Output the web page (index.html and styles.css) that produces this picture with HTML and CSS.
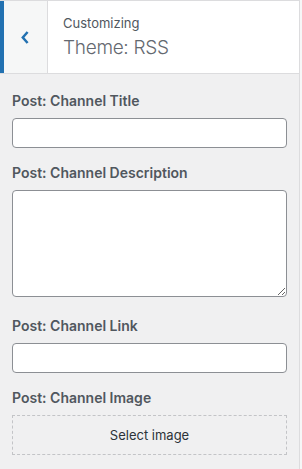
FILE: index.html
```html
<!DOCTYPE html>
<html lang="en">
<head>
    <meta charset="UTF-8">
    <meta name="viewport" content="width=device-width, initial-scale=1.0">
    <title>Customizing Theme: RSS</title>
    <link rel="stylesheet" href="styles.css">
</head>
<body>
    <div class="panel">
        <div class="panel-header">
            <button class="back-button" aria-label="Back">
                <svg width="8" height="13" viewBox="0 0 8 13">
                    <path d="M6.6 1 L1.8 6.5 L6.6 12" fill="none" stroke="#2271b1" stroke-width="2.5"/>
                </svg>
            </button>
            <div class="panel-title">
                <span class="notice">Customizing</span>
                <h3>Theme: RSS</h3>
            </div>
        </div>

        <ul class="controls">
            <li class="control">
                <label class="control-title" for="channel-title">Post: Channel Title</label>
                <input type="text" id="channel-title">
            </li>
            <li class="control">
                <label class="control-title" for="channel-desc">Post: Channel Description</label>
                <textarea id="channel-desc"></textarea>
            </li>
            <li class="control">
                <label class="control-title" for="channel-link">Post: Channel Link</label>
                <input type="text" id="channel-link">
            </li>
            <li class="control">
                <span class="control-title">Post: Channel Image</span>
                <button class="upload-button">Select image</button>
            </li>
        </ul>
    </div>
</body>
</html>
```

FILE: styles.css
```css
body {
    margin: 0;
    font-family: Inter, "Noto Sans", sans-serif;
    background-color: #f6f7f7;
    color: #50575e;
}
.panel {
    width: 299px;
    height: 469px;
    background: #f0f0f1;
    border-right: 1px solid #dcdcde;
}
.panel-header {
    display: flex;
    background: #fff;
    border-top: 1px solid #dcdcde;
    border-bottom: 1px solid #dcdcde;
    height: 72px;
}
.back-button {
    width: 48px;
    background: #f6f7f7;
    border: none;
    border-left: 4px solid #2271b1;
    border-right: 1px solid #dcdcde;
    padding: 0 1px 0 0;
    display: flex;
    align-items: center;
    justify-content: center;
    cursor: pointer;
}
.panel-title {
    padding: 10px 10px 0 15px;
}
.notice {
    display: block;
    font-size: 13px;
    line-height: 24px;
    color: #50575e;
}
.panel-title h3 {
    margin: 0;
    font-size: 19px;
    font-weight: 300;
    line-height: 26px;
    letter-spacing: -0.3px;
    color: #646970;
}
.controls {
    list-style: none;
    margin: 0;
    padding: 13px 12px 0;
}
.control {
    margin-bottom: 11px;
}
.control-title {
    display: block;
    font-size: 14px;
    font-weight: 600;
    line-height: 24px;
    padding-top: 2px;
    margin-bottom: 5px;
}
input,
textarea {
    display: block;
    box-sizing: border-box;
    width: 100%;
    border: 1px solid #8c8f94;
    border-radius: 4px;
    background: #fff;
    margin: 0;
    font-family: inherit;
}
input {
    height: 30px;
}
textarea {
    height: 107px;
    margin-bottom: 15px;
}
.upload-button {
    display: block;
    box-sizing: border-box;
    width: 100%;
    height: 40px;
    background: none;
    border: 1px dashed #c3c4c7;
    border-radius: 0;
    font-family: inherit;
    font-size: 13px;
    color: #2c3338;
    cursor: pointer;
}
```
